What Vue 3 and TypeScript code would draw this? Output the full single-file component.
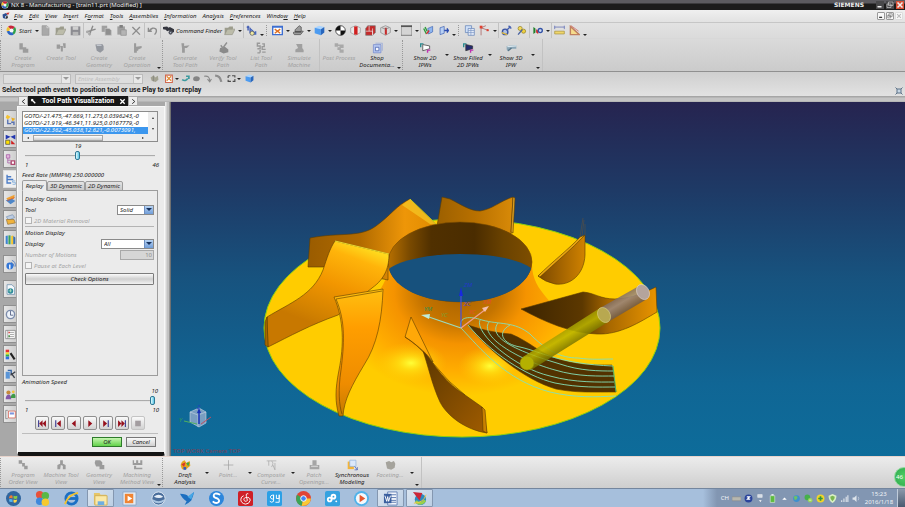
<script setup lang="ts">
import { h, ref } from 'vue'

type Shape = [d: string, fill: string, stroke?: string, width?: number]

const G = '#9b9b9b'
const C = (x: number, y: number, r: number) =>
  `M${x - r} ${y}a${r} ${r} 0 1 0 ${2 * r} 0a${r} ${r} 0 1 0 ${-2 * r} 0Z`

const shapes: Record<string, Shape[]> = {
  nx: [[C(8, 8, 7), '#e8e8e8'], ['M8 8L3 2Q8-1 13 3Z', '#c8243a'], ['M8 8L13 3Q17 9 11 14Z', '#2fa04a'], ['M8 8L11 14Q4 17 1 9Z', '#2b64c4'], ['M8 8L1 9Q0 5 3 2Z', '#f0c030'], [C(8, 8, 3), '#f4f6f8']],
  part: [['M1 5L8 2L11 6L6 9L8 14L2 12Z', '#2d4f91'], ['M8 2L15 1L12 6Z', '#cf3030'], ['M8 9L11 7L12 12L8 14Z', '#3a3a3a']],
  page: [['M3 1H10L13 4V15H3Z', '#a9a9a9', '#989898'], ['M10 1V4H13', 'none', '#ddd']],
  folder: [['M1 14V4H6L8 2H13V6', '#9c9c8c'], ['M1 14L5 6H16L12 14Z', '#bcbcaa', '#98988a']],
  save: [['M1 2H15V15H1Z', '#8d8d92'], ['M4 2H12V7H4Z', '#d0d0d0'], ['M4 10H12V15H4Z', '#b9b9b9']],
  cut: [['M10 1L7 9L5 15M14 6L1 10', 'none', '#8a8a8a', 2], [C(5, 13, 2), '#aaa'], [C(2, 10, 2), '#aaa']],
  copy: [['M1 1H9V10H1Z', '#a0a0a0'], ['M6 5H12L15 8V15H6Z', '#8f8f8f', '#c4c4c4']],
  paste: [['M2 2H13V14H2Z', '#9f9f9f'], ['M5 0H10V4H5Z', '#808080'], ['M7 7H15V15H7Z', '#b4b4b4', '#8d8d8d']],
  del: [['M2 3L13 14M13 3L2 14', 'none', '#8c8c8c', 2]],
  undo: [['M2 4V9H7M3 9Q8 2 13 6Q15 10 11 14', 'none', '#8c8c8c', 2]],
  binoc: [['M0 3L6 2L8 4L10 3L16 6V10L12 12L9 8L6 9L4 7L0 6Z', '#34363f'], [C(11, 11, 3), '#52555f'], [C(11, 11, 1), '#b8c2d0']],
  move: [['M3 1V8M1 3H5M6 4V12', 'none', '#3a56b0', 2], ['M7 6L14 13M10 13H14V9', 'none', '#4466c0', 2], [C(9, 12, 3), '#f0e9a0', '#555']],
  fit: [['M1 2H15V14H1Z', '#fff', '#3f6fd0', 2], ['M4 6L12 12M12 6L4 12', 'none', '#e07020', 2], ['M1 2H15V4H1Z', '#3f6fd0']],
  sphere: [['M3 7L9 1L12 3V9H15L11 14H2L0 11L3 10Z', '#9b9b9b', '#4a4a4a'], ['M3 10H12', 'none', '#444', 2]],
  cube: [['M1 4L7 1L15 3L10 6Z', '#a9d4ff'], ['M1 4L10 6V15L1 12Z', '#4c9bf0'], ['M10 6L15 3V11L10 15Z', '#2766bd']],
  bw: [[C(8, 8, 7), '#fff', '#111', 1], ['M8 1A7 7 0 0 0 1 8H8V15A7 7 0 0 0 15 8H8Z', '#111']],
  sec1: [['M8 1L15 4V11L8 15L1 11V4Z', '#e8e8e8', '#999'], ['M6 2H11V14H6Z', '#d02020']],
  sec2: [['M4 1H15V11L11 15H1V5Z', '#c52a2a', '#777'], ['M1 9H11V15M6 1V9M11 5V15', 'none', '#e9e9e9', 1]],
  sec3: [['M8 1L15 4V11L8 15L1 11V4Z', '#d8d8d8', '#888'], ['M7 4H10V14H7Z', '#c52a2a'], ['M3 4L8 6L13 4', 'none', '#777']],
  box: [['M0 1H16V15H0Z', '#d4d4d4', '#555', 1], ['M0 1H16V3H0Z', '#555']],
  wcs1: [['M7 5L14 2V10L8 13Z', '#8fb6f0', '#4066b4'], ['M1 5L5 13M3 3L6 9', 'none', '#2f9b3e', 2], ['M5 13L9 8', 'none', '#d03030', 2]],
  wcs2: [['M3 4L9 2V12L3 14Z', '#b8d0f4', '#3c5fb2'], ['M9 8H15M13 5L15 8L13 11', 'none', '#2a4bb0', 2]],
  layers: [['M2 1H11V11H2Z', '#cfe0f8', '#5f7fb5'], ['M6 5H15V15H6Z', '#e4ecf8', '#5f7fb5'], ['M6 8H15M6 11H15M10 5V15', 'none', '#7d98c6']],
  csys: [['M3 15V4L14 8M3 4L10 1', 'none', '#a05050', 1], ['M1 1H5V5H1Z', '#e04030'], ['M11 6H14V9H11Z', '#e04030']],
  meas: [[C(6, 10, 4), '#aebfe2', '#3852a0', 2], ['M8 8L14 2M11 1L15 5', 'none', '#445fb0', 2], ['M1 11L9 14', 'none', '#e0ba3a', 2]],
  key: [[C(6, 5, 3), '#f4d95a', '#8f7d20'], [C(11, 9, 3), '#f0d040', '#8f7d20'], ['M3 14L9 7', 'none', '#4c64a0', 2]],
  rgb: [['M2 3V13L5 11V5Z', '#20802c'], ['M6 6L9 8V13L6 11Z', '#d02a2a'], [C(12, 8, 3), '#cfdbf3', '#3353a6', 2]],
  dist: [['M1 3H15M1 6V1M15 6V1', 'none', '#5060b0', 1], ['M1 9H15V13H1Z', '#f0d66a', '#a5903a']],
  angle: [['M2 2L15 14H2Z', '#f6dc8c', '#c08060', 2], ['M3 1L14 9', 'none', '#d05a50', 1]],
  blk1: [['M2 1H7V7H12V9H15V15H7V10H2Z', '#9c9c9c']],
  blk2: [['M1 3H6V9H1ZM6 5H10V13H7V8ZM10 1H14V8H11Z', G]],
  blk3: [['M2 3L12 2L14 5V11L9 15L4 12Z', '#93979e'], ['M4 4L11 4', 'none', '#c5c9d0', 2]],
  blk4: [['M3 1H6V6L14 5V8L9 10V12H7V15H3V9Z', G]],
  gen: [['M2 1H6V5L14 4L10 8H7V15H3V9Z', G]],
  verify: [['M3 8L10 6L15 10V14L8 16L2 13Z', '#8a8a8a'], ['M4 4L7 8L13 0', 'none', '#8f8f8f', 2]],
  list: [['M6 1H2V5H6V9H2M6 11V15M2 15H6M9 2H12V6H9V10H14M9 14H14', 'none', '#999', 2]],
  sim: [['M3 2H12V8L14 11V14H2V10L6 8Z', '#a0a0a0']],
  post: [['M1 1H6V6H1ZM6 3H10V10H14V15H8V11H5V7H8V5H6ZM10 3H14V8H10Z', '#a9a9a9']],
  shop: [['M2 3H13V15H2Z', '#b3c4ee', '#7288cc'], ['M5 1H15V12', 'none', '#8fa3da', 1], ['M5 7H10V12H5Z', '#f6f8ff', '#3c58a8']],
  ipw1: [['M1 1V7M1 2H5', 'none', '#2a8a90', 2], ['M4 3L14 5V9L4 12Z', '#fff', '#333'], ['M11 11H15M11 15V11', 'none', '#c030b0', 2]],
  ipw2: [['M1 1V7M1 2H5', 'none', '#2a8a90', 2], ['M4 3L14 5V9L4 12Z', '#242a6e', '#333'], ['M11 11H15M11 15V11', 'none', '#c030b0', 2]],
  ipw3: [['M1 5L15 4V9L7 9L3 13L1 10Z', '#8ba6b6'], ['M2 6L15 5', 'none', '#d7e6ee', 2], ['M3 12L8 8', 'none', '#547488', 2]],
  v1: [['M1 1H6V5H10V9H14V14H9V10H6V6H1Z', G]],
  v2: [['M6 1H10V6L14 8V14H10V9L7 8L6 14H2V8L6 6Z', G]],
  v3: [['M2 1H9L12 4V8H15V14H8V10H3L1 5Z', G]],
  v4: [['M1 1H3V5H6V1H9V5H12V1H15V8H1ZM3 9H6V12H15V14H3Z', G]],
  draft: [['M1 9Q1 3 7 1L9 5L14 2L15 9L9 14H3Z', '#e7a51f'], ['M2 7L8 4L6 11Z', '#d6352a'], ['M9 5L14 4L12 10Z', '#3aa846'], ['M5 11H9V15H5Z', '#3559b6']],
  point: [['M8 1V15M1 8H15', 'none', '#9d9d9d', 1]],
  comp: [['M1 2H15M4 2V9M8 2Q12 5 8 11M13 5V15M10 8L13 15', 'none', '#a5a5a5', 1]],
  patch: [['M5 1H11V8H15V14H1V8H5Z', '#a5a5a5'], ['M3 10H13', 'none', '#d0d0d0', 2]],
  sync: [['M1 3H10V14H1Z', '#f3b43a'], ['M4 1H13V10H4Z', '#dce8fa', '#8fb0dc'], ['M11 10L15 15M15 11V15H11', 'none', '#3b58b0', 1]],
  facet: [['M1 4L6 2L9 4L13 2L15 6L14 12L9 15L3 13Z', '#a5a39c']],
  filt: [['M1 2H13V15H1Z', '#fff', '#d06a50', 2], ['M3 4L11 12M11 4L3 12', 'none', '#e08a30', 2]],
  swoop: [['M2 10Q8 14 12 8M9 4H14V9', 'none', '#3c9a9e', 3]],
  blob: [['M2 9Q2 4 8 4Q14 4 14 9Q13 13 8 13Q2 13 2 9Z', '#858585']],
  arc: [['M2 4Q12 2 12 13M8 9L12 14L15 9', 'none', '#8a8a8a', 2]],
  arc2: [['M2 3Q11 3 13 14', 'none', '#8d8d8d', 4]],
  dash: [['M2 3H6M9 3H14V6M14 9V13H10M7 13H2V10M2 7V3', 'none', '#4c4c4c', 2]],
  hex: [['M1 6L7 2L9 6L14 3L15 10L10 14L3 12Z', '#a2a291'], ['M6 3V13', 'none', '#777']],
  r1: [['M3 1L8 4L4 8L1 5Z', '#f5c330'], ['M9 5L15 7L11 11Z', '#e9ae22'], ['M4 8V14H9M9 12H13V16', 'none', '#5872b2', 2]],
  r2: [['M1 1V8L8 4Z', '#2338b0'], ['M15 1V8L8 4Z', '#2338b0'], ['M1 9H7V15H1Z', '#ffe000', '#444'], ['M9 15V9L15 15Z', '#d02020']],
  r3: [['M2 1H7V6H2Z', '#e2b7dc', '#a050a0'], ['M4 6V13H9M4 9H8', 'none', '#a050a0', 1], ['M9 10H14V15H9Z', '#fff', '#b04a70', 2]],
  r4: [['M3 1V14M3 4H9M3 8H12M3 13H9', 'none', '#4b7cc6', 2], ['M11 10H15M11 10V12H15V15H11', 'none', '#69a0d8', 1]],
  r5: [['M2 6L14 1L13 7L5 11Z', '#f0a030'], ['M1 9L10 7L15 10L8 15Z', '#4e87c8'], ['M3 10L14 5', 'none', '#d05038', 1]],
  r6: [['M2 4L11 1L14 5L5 9Z', '#bdcde2', '#7890b0'], ['M2 8H13L15 13L4 15Z', '#efb23c', '#94733a']],
  r7: [['M1 3L4 2V15L1 14Z', '#3b82d0'], ['M5 2H8V15H5Z', '#38a35a'], ['M9 3L12 2V15H9Z', '#f4c62e'], ['M12 3L15 5V14L12 15Z', '#3b6fb0']],
  r8: [[C(7, 10, 5), '#3276d6'], ['M7 8V14', 'none', '#fff', 2], ['M9 5Q13 6 13 11M10 2Q16 4 15 11', 'none', '#2c62b8', 1]],
  r9: [['M3 1H10L14 5V15H3Z', '#f5f8fb', '#6087a8'], [C(8, 10, 4), '#2f8a9a'], ['M5 10H10M8 7V12', 'none', '#bfe9c0', 1]],
  r10: [[C(8, 8, 6), '#eef3fa', '#7c8cab', 2], ['M8 3V9H12', 'none', '#2c3c66', 1]],
  r11: [['M1 2H15V14H1Z', '#fafafa', '#777'], ['M4 2V14M7 5H13M7 8H13M7 11H13', 'none', '#8a8a8a', 1], ['M5 4H7V6H5Z', '#d03030'], ['M5 9H7V12H5Z', '#308030']],
  r12: [['M1 1H6V5H1Z', '#e83030'], ['M1 5H6V8H1Z', '#f4e030'], ['M1 8H6V11H1Z', '#30b040'], ['M1 11H6V15H1Z', '#3070e0'], ['M8 6L14 15', 'none', '#222', 3]],
  r13: [['M1 4H7V14H1Z', '#5a95d8'], ['M4 2H9V8', 'none', '#3565a5', 2], ['M8 9L15 4M9 6L14 13', 'none', '#3c414b', 2]],
  r14: [[C(5, 5, 3), '#c58a3c'], ['M1 15Q1 8 6 8Q9 9 9 15Z', '#8458a8'], [C(12, 4, 2), '#f2c53a'], ['M8 13Q9 7 13 7Q16 8 15 13Z', '#3f9a48']],
  r15: [['M4 2H1V14H4', 'none', '#777', 1], ['M5 3H15V13H5Z', '#fff', '#d05040', 1], ['M7 5H13V8H7Z', '#7b94dc']],
  win: [[C(8, 8, 8), '#2f659e'], ['M4 5Q6 4 7 5V8Q5 7 3 8Z', '#f07a35'], ['M8 5Q10 6 12 5V8Q10 9 8 8Z', '#8dcc42'], ['M3 9Q5 8 7 9V12Q5 11 4 12Z', '#56b4ee'], ['M8 9Q10 10 12 9L11 12Q9 13 8 12Z', '#ffd64a']],
  balls: [[C(5, 4, 4), '#e9513a'], [C(11, 5, 4), '#58b848'], [C(5, 11, 4), '#3e88dc'], [C(11, 12, 4), '#f6c92f']],
  ie: [[C(8, 8, 6), 'none', '#1c6fc4', 3], ['M4 8H13', 'none', '#1c6fc4', 3], ['M1 14Q4 4 15 2', 'none', '#f2c230', 2]],
  files: [['M1 2H7L8 4H14V14H1Z', '#e6c667'], ['M2 5H15V15H2Z', '#fbe9a6', '#cfae55'], ['M5 11H12V15H5Z', '#6eaee0']],
  play: [['M1 1H15V15H1Z', '#e4ecf4', '#8fa8c4'], ['M3 3H12V13H3Z', '#f08432'], ['M6 5L11 8L6 11Z', '#fff']],
  orb: [[C(8, 8, 7), '#4a6e9c', '#dfe8f2', 1], ['M3 6Q8 2 13 6Q9 9 3 6Z', '#e6eef8'], ['M2 10Q8 14 14 10', 'none', '#a8c4e0', 2]],
  bird: [['M0 3Q7 3 9 6L15 1Q14 6 12 10Q9 13 5 15L7 11Q3 9 0 3Z', '#1d6fc0'], ['M8 6L15 1L12 9Z', '#45a7e6']],
  sogou: [[C(8, 8, 8), '#2c86dc'], ['M12 4Q5 1 5 5Q5 7 9 8Q12 10 10 12Q7 14 4 11', 'none', '#fff', 2]],
  music: [['M2 0H14Q16 0 16 2V14Q16 16 14 16H2Q0 16 0 14V2Q0 0 2 0Z', '#cf2027'], ['M11 3Q8 2 9 6L10 10A2 2 0 1 1 8 7Q13 6 13 10Q12 14 8 14Q3 13 3 9Q3 6 6 5', 'none', '#fff', 1]],
  note: [['M2 0H14Q16 0 16 2V14Q16 16 14 16H2Q0 16 0 14V2Q0 0 2 0Z', '#2ba0e6'], ['M7 5A2 2 0 1 0 7 8V4V11Q5 13 3 11M10 4V8H13V4V12H9', 'none', '#fff', 1]],
  chrome: [[C(8, 8, 8), '#e04436'], ['M1 4L8 8L6 16Q-2 13 1 4Z', '#3aa557'], ['M8 8H16Q15 16 6 16Z', '#f9c936'], [C(8, 8, 3), '#4285f4', '#fff', 1]],
  cloud: [['M2 0H14Q16 0 16 2V14Q16 16 14 16H2Q0 16 0 14V2Q0 0 2 0Z', '#35a2e0'], [C(5, 9, 2), 'none', '#fff', 2], [C(9, 6, 2), 'none', '#fff', 2], [C(12, 11, 1), '#fff']],
  video: [[C(8, 8, 8), '#4fb2ea'], [C(8, 8, 6), '#f4f8fb'], ['M6 4L12 8L6 12Z', '#e5562e']],
  word: [['M5 1H15V15H5Z', '#f4f7fc', '#6280b5'], ['M8 4H14M8 7H14M8 10H14M8 12H14', 'none', '#5876ae', 1], ['M1 3H9V13H1Z', '#3a5f9f'], ['M2 5L4 11L5 6L6 11L8 5', 'none', '#fff', 1]],
  nx8: [[C(9, 9, 6), '#2d8ac0'], ['M4 11Q9 16 14 10', 'none', '#9bd04a', 3], ['M1 1L11 2L8 10Z', '#cc2638'], ['M2 13Q12 13 15 4', 'none', '#f3c642', 1]],
  kbd: [['M0 5H16V12H0Z', '#b7b7ae', '#888']],
  help: [[C(8, 8, 7), '#2a449c'], ['M5 5H10L6 9H11', 'none', '#fff', 2]],
  opt: [['M3 1H11V6H3Z', '#d5dde8', '#eee'], ['M5 11H10L8 14Z', '#fff']],
  usb: [['M4 3H12V15H4Z', '#5dbb3f', '#e5f0e0', 1], ['M6 0H10V3H6Z', '#dfe5e8']],
  up: [['M4 10L8 6L12 10Z', '#fff']],
  net: [[C(8, 8, 6), '#3f8fcf'], ['M3 5Q8 2 10 6Q9 10 5 11Z', '#6dc06a']],
  wx: [[C(6, 6, 5), '#46b04c'], [C(11, 11, 4), '#9ad65a'], ['M9 11H13', 'none', '#fff', 1]],
  plus: [[C(8, 8, 7), '#f0d52a'], ['M8 4V12M4 8H12', 'none', '#2f9440', 3]],
  shield: [['M8 0L15 3Q15 12 8 16Q1 12 1 3Z', '#d9efc4'], ['M8 3L12 5Q12 10 8 13Q4 10 4 5Z', '#79b650']],
  sig: [['M2 14V11H4V14ZM6 14V8H8V14ZM10 14V5H12V14ZM13 14V2H15V14Z', '#dfe5ec']],
  vol: [['M1 6H4L8 2V14L4 10H1Z', '#dfe5ec'], ['M11 5Q13 8 11 11', 'none', '#dfe5ec', 1]],
  first: [['M1 2H3V14H1Z', '#3a3a90'], ['M9 2V14L3 8ZM15 2V14L9 8Z', '#96101c']],
  prev: [['M3 2H5V14H3Z', '#3a3a90'], ['M13 2V14L6 8Z', '#96101c']],
  back: [['M11 2V14L4 8Z', '#96101c']],
  fwd: [['M5 2V14L12 8Z', '#96101c']],
  next: [['M11 2H13V14H11Z', '#3a3a90'], ['M3 2V14L10 8Z', '#96101c']],
  last: [['M13 2H15V14H13Z', '#3a3a90'], ['M1 2V14L7 8ZM7 2V14L13 8Z', '#96101c']],
  stop: [['M3 3H13V13H3Z', '#a39da0']],
  min: [['M3 10H11V13H3Z', 'currentColor']],
  max: [['M5 2H14V9H5ZM2 6H10V13H2Z', 'none', 'currentColor', 1]],
  close: [['M3 3L13 13M13 3L3 13', 'none', 'currentColor', 3]],
  pin: [['M3 3L12 12M3 7L7 3', 'none', '#fff', 3]],
  lt: [['M11 3L5 8L11 13', 'none', '#222', 2]],
  gt: [['M5 3L11 8L5 13', 'none', '#222', 2]],
  full: [['M1 1L5 5M15 1L11 5M1 15L5 11M15 15L11 11', 'none', '#5d7388', 2], ['M4 4H12V12H4Z', '#c7d6e4', '#5d7388', 2]],
}

const Icon = (props: { name: string }) =>
  h('svg', { viewBox: '0 0 16 16', 'aria-hidden': 'true' },
    shapes[props.name].map(([d, fill, stroke, width]) =>
      h('path', { d, fill, stroke: stroke ?? 'none', 'stroke-width': width ?? 1 })))
Icon.props = ['name']

const menus = ['File', 'Edit', 'View', 'Insert', 'Format', 'Tools', 'Assemblies', 'Information', 'Analysis', 'Preferences', 'Window', 'Help']
const menuKeys = [0, 0, 0, 2, 1, 0, 0, 0, 3, 0, 5, 0]

// Bar tokens: "|" separator, ":" grip, "v" drop-down arrow, "." overflow mark
const leftTools = 'page folder save | cut copy paste del | undo |'.split(' ')
const rightTools = 'folder v | move . : fit v sphere v cube v bw sec1 sec2 sec3 v box v | wcs1 wcs2 . : layers csys v | meas key | rgb v | dist angle .'.split(' ')
const marks: Record<string, string> = { '|': 'sep', ':': 'grip', v: 'arrow', '.': 'more' }

interface Tool { mark?: string; icon?: string; text?: string; on?: boolean }
const t = (icon: string, text: string, on = false): Tool => ({ icon, text, on })
const m = (mark: string): Tool => ({ mark })
const cam: Tool[] = [
  m(':'), t('blk1', 'Create\nProgram'), t('blk2', 'Create Tool'), t('blk3', 'Create\nGeometry'), t('blk4', 'Create\nOperation'), m('.'), m(':'),
  t('gen', 'Generate\nTool Path'), t('verify', 'Verify Tool\nPath'), t('list', 'List Tool\nPath'), t('sim', 'Simulate\nMachine'), m('|'),
  t('post', 'Post Process'), t('shop', 'Shop\nDocumenta...', true), m('.'), m(':'),
  t('ipw1', 'Show 2D\nIPWs', true), m('v'), t('ipw2', 'Show Filled\n2D IPWs', true), m('v'), t('ipw3', 'Show 3D\nIPW', true), m('v'), m('.'), m('|'),
]
const views: Tool[] = [
  m(':'), t('v1', 'Program\nOrder View'), t('v2', 'Machine Tool\nView'), t('v3', 'Geometry\nView'), t('v4', 'Machining\nMethod View'), m('.'), m(':'),
  t('draft', 'Draft\nAnalysis', true), m('v'), t('point', 'Point...'), m('v'), t('comp', 'Composite\nCurve...'), m('v'),
  t('patch', 'Patch\nOpenings...'), t('sync', 'Synchronous\nModeling', true), t('facet', 'Faceting...'), m('v'), m('.'), m('|'),
]

const resources = Array.from({ length: 15 }, (_, i) => `r${i + 1}`)
const moves = ['GOTO/-21.475,-47.669,11.273,0.0396243,-0', 'GOTO/-21.919,-46.341,11.925,0.0167779,-0', 'GOTO/-22.362,-45.038,12.621,-0.0073091,']
const tabs = ['Replay', '3D Dynamic', '2D Dynamic']
const tab = ref('Replay')
const row = ref(2)
const motion = ref(19)
const speed = ref(10)
const transport = ['first', 'prev', 'back', 'fwd', 'next', 'last', 'stop']
const apps = ['win', 'balls', 'ie', 'files', 'play', 'orb', 'bird', 'sogou', 'music', 'note', 'chrome', 'cloud', 'video', 'word', 'nx8']
const openApps = ['files', 'word', 'nx8']
const tray = ['kbd', 'help', 'opt', 'usb', 'up', 'net', 'wx', 'plus', 'shield', 'sig', 'vol']
</script>

<template>
  <div class="app">
    <header class="title">
      <Icon name="nx" /><h1>NX 8 - Manufacturing - [train11.prt (Modified) ]</h1>
      <b class="brand">SIEMENS</b>
      <button aria-label="Minimize"><Icon name="min" /></button>
      <button aria-label="Restore"><Icon name="max" /></button>
      <button class="red" aria-label="Close"><Icon name="close" /></button>
    </header>

    <nav class="menu">
      <Icon name="part" />
      <button v-for="(x, i) in menus" :key="x">{{ x.slice(0, menuKeys[i]) }}<u>{{ x[menuKeys[i]] }}</u>{{ x.slice(menuKeys[i] + 1) }}</button>
      <span class="fill"></span>
      <button class="mdi" aria-label="Minimize part"><Icon name="min" /></button>
      <button class="mdi" aria-label="Restore part"><Icon name="max" /></button>
      <button class="mdi off" aria-label="Close part"><Icon name="close" /></button>
    </nav>

    <section class="bars">
      <div class="bar">
        <i class="grip"></i>
        <button class="start"><Icon name="nx" />Start<i class="arrow"></i></button>
        <template v-for="(x, i) in leftTools" :key="i">
          <i v-if="marks[x]" :class="marks[x]"></i>
          <button v-else class="tool" :aria-label="x"><Icon :name="x" /></button>
        </template>
        <button class="finder"><Icon name="binoc" />Command Finder</button>
        <template v-for="(x, i) in rightTools" :key="i">
          <i v-if="marks[x]" :class="marks[x]"></i>
          <button v-else class="tool" :aria-label="x"><Icon :name="x" /></button>
        </template>
      </div>
      <div class="ribbon">
        <template v-for="(x, i) in cam" :key="i">
          <i v-if="x.mark" :class="marks[x.mark]"></i>
          <button v-else :class="{ on: x.on }"><Icon :name="x.icon!" /><span>{{ x.text }}</span></button>
        </template>
      </div>
    </section>

    <section class="status">
      <div class="filters">
        <span class="drop off wide"><select aria-label="Type filter" disabled><option></option></select></span>
        <span class="drop off wide"><select aria-label="Selection scope" disabled><option>Entire Assembly</option></select></span>
        <button class="tool" aria-label="Reset"><Icon name="hex" /></button>
        <button class="tool" aria-label="Snap"><Icon name="filt" /></button><i class="arrow"></i>
        <button v-for="x in ['swoop', 'blob', 'arc', 'arc2']" :key="x" class="tool small" :aria-label="x"><Icon :name="x" /></button>
        <button class="tool" aria-label="Rectangle"><Icon name="dash" /></button><i class="arrow"></i>
        <button class="tool" aria-label="Shaded"><Icon name="cube" /></button>
      </div>
      <div class="prompt"><p>Select tool path event to position tool or use Play to start replay</p>
        <button aria-label="Full screen"><Icon name="full" /></button></div>
    </section>

    <main class="work">
      <aside class="resources">
        <button v-for="x in resources" :key="x" :class="{ gap: ['r8', 'r9', 'r10'].includes(x), cur: x === 'r4' }" :aria-label="x"><Icon :name="x" /></button>
      </aside>

      <section class="dialog" aria-label="Tool Path Visualization">
        <header>
          <button aria-label="Previous"><Icon name="lt" /></button>
          <div class="cap"><Icon name="pin" /><h2>Tool Path Visualization</h2><button aria-label="Close dialog"><Icon name="close" /></button></div>
          <button aria-label="Next"><Icon name="gt" /></button>
        </header>
        <div class="body">
          <div class="listbox">
            <ul role="listbox" aria-label="Tool path events">
              <li v-for="(x, i) in moves" :key="x" role="option" :aria-selected="row === i" @click="row = i">{{ x }}</li>
            </ul>
            <div class="vs"><i></i><i></i></div>
            <div class="hs"><i></i><b></b><i></i></div>
          </div>
          <div class="slide">
            <output class="mid">{{ motion }}</output>
            <input v-model.number="motion" type="range" min="1" max="46" aria-label="Motion">
            <div class="ends"><span>1</span><span>46</span></div>
          </div>
          <p class="feed">Feed Rate (MMPM) 250.000000</p>
          <div class="tabs" role="tablist">
            <button v-for="x in tabs" :key="x" role="tab" :aria-selected="tab === x" @click="tab = x">{{ x }}</button>
          </div>
          <div class="panel">
            <h3>Display Options</h3>
            <div class="field"><label for="tool">Tool</label><span class="drop"><select id="tool"><option>Solid</option></select></span></div>
            <label class="check"><input type="checkbox" disabled>2D Material Removal</label>
            <hr>
            <h3>Motion Display</h3>
            <div class="field long"><label for="disp">Display</label><span class="drop"><select id="disp"><option>All</option></select></span></div>
            <div class="field dim"><label for="num">Number of Motions</label><input id="num" value="10" disabled></div>
            <label class="check"><input type="checkbox" disabled>Pause at Each Level</label>
            <button class="options">Check Options</button>
          </div>
          <p class="feed">Animation Speed</p>
          <div class="slide">
            <output class="end">{{ speed }}</output>
            <input v-model.number="speed" type="range" min="1" max="10" aria-label="Animation Speed">
            <div class="ends"><span>1</span><span>10</span></div>
          </div>
          <div class="transport">
            <button v-for="x in transport" :key="x" :aria-label="x" :class="{ off: x === 'stop' }"><Icon :name="x" /></button>
          </div>
          <footer><button class="ok">OK</button><button>Cancel</button></footer>
        </div>
      </section>

      <div class="edge"></div>

      <svg class="view" viewBox="171 102 734 354" preserveAspectRatio="xMidYMid slice" role="img" aria-label="Impeller with tool path">
        <defs>
          <linearGradient id="sky" x2="0" y2="1"><stop stop-color="#262450" /><stop offset=".25" stop-color="#1e3a66" /><stop offset=".5" stop-color="#17537f" /><stop offset=".8" stop-color="#106695" /><stop offset="1" stop-color="#0d6c9a" /></linearGradient>
          <radialGradient id="hub" gradientUnits="userSpaceOnUse" cx="0" cy="0" r="1" gradientTransform="translate(460 292) scale(132 104)"><stop stop-color="#a86200" /><stop offset=".3" stop-color="#c47400" /><stop offset=".5" stop-color="#f59300" /><stop offset=".75" stop-color="#ffac00" /><stop offset="1" stop-color="#ffcc00" /></radialGradient>
          <radialGradient id="glow"><stop stop-color="#ffff38" /><stop offset=".35" stop-color="#ffee18" stop-opacity=".6" /><stop offset="1" stop-color="#ffcc00" stop-opacity="0" /></radialGradient>
          <linearGradient id="wall"><stop stop-color="#b87000" /><stop offset=".15" stop-color="#7a4a00" /><stop offset=".3" stop-color="#503000" /><stop offset=".6" stop-color="#4a2c00" /><stop offset=".8" stop-color="#6a4200" /><stop offset="1" stop-color="#7e4e00" /></linearGradient>
          <linearGradient id="ga"><stop stop-color="#9a5c00" /><stop offset=".4" stop-color="#b06a00" /><stop offset=".75" stop-color="#ee9608" /><stop offset="1" stop-color="#e08c00" /></linearGradient>
          <linearGradient id="gb" gradientUnits="userSpaceOnUse" x1="362" y1="247" x2="330" y2="330"><stop stop-color="#ffd81c" /><stop offset=".15" stop-color="#ffb40a" /><stop offset=".5" stop-color="#f29600" /><stop offset=".9" stop-color="#d08000" /><stop offset="1" stop-color="#c87800" /></linearGradient>
          <linearGradient id="gc" x2="0" y2="1"><stop stop-color="#ffc010" /><stop offset=".3" stop-color="#ff9e00" /><stop offset=".75" stop-color="#ee8c00" /><stop offset="1" stop-color="#c27a00" /></linearGradient>
          <linearGradient id="ge"><stop stop-color="#9c6000" /><stop offset=".5" stop-color="#b87000" /><stop offset="1" stop-color="#d88a08" /></linearGradient>
          <linearGradient id="gf"><stop stop-color="#7a4800" /><stop offset="1" stop-color="#d08200" /></linearGradient>
          <linearGradient id="gg"><stop stop-color="#3c2400" /><stop offset=".45" stop-color="#5c3800" /><stop offset=".65" stop-color="#a86800" /><stop offset="1" stop-color="#e89400" /></linearGradient>
          <linearGradient id="gd" x2="1" y2="1"><stop stop-color="#5a3600" /><stop offset="1" stop-color="#a05c00" /></linearGradient>
          <linearGradient id="cyl" gradientUnits="userSpaceOnUse" x1="561" y1="331" x2="570" y2="346"><stop stop-color="#a09a00" /><stop offset=".4" stop-color="#bcb600" /><stop offset="1" stop-color="#7a7600" /></linearGradient>
          <linearGradient id="cyl2" gradientUnits="userSpaceOnUse" x1="619" y1="296" x2="628" y2="311"><stop stop-color="#806c60" /><stop offset=".4" stop-color="#9c8a80" /><stop offset="1" stop-color="#6c5846" /></linearGradient>
        </defs>
        <rect x="171" y="102" width="734" height="354" fill="url(#sky)" />
        <ellipse cx="462" cy="328" rx="198" ry="109" fill="#ffcc00" stroke="#8ad010" />
        <path d="M388 262C390 285 372 300 350 322C350 375 400 402 460 400C520 400 560 375 565 330C560 300 531 295 532 262Z" fill="url(#hub)" />
        <ellipse cx="411" cy="363" rx="36" ry="21" fill="url(#glow)" />
        <ellipse cx="490" cy="366" rx="32" ry="20" fill="url(#glow)" />
        <g stroke="#5c3c00" stroke-width=".6" stroke-linejoin="round">
          <path d="M442 197L450 199C462 205 470 211 480 211C493 209 500 201 513 197L511 234C490 224 465 220 437 226Z" fill="url(#ge)" />
          <path d="M513 197L515 198L513 233L511 232Z" fill="#e0a020" />
          <path d="M310 238C340 232 360 238 376 226C390 216 397 205 410 199L437 225C405 235 392 248 388 268L388 280L325 267H308Z" fill="url(#ga)" />
        </g>
        <path d="M410 199L437 225L430 224L402 205Z" fill="#f6d22c" opacity=".6" />
        <path d="M410 199L437 225" stroke="#c8c820" />
        <ellipse cx="460" cy="262" rx="72" ry="40" fill="url(#wall)" stroke="#7a4c00" stroke-width=".6" />
        <path d="M389 269C400 260 430 254 460 254C492 254 518 259 531 268C526 288 497 302 460 302C423 302 394 288 389 269Z" fill="#17517d" />
        <g stroke="#5c3c00" stroke-width=".6" stroke-linejoin="round">
          <path d="M372 288L338 315C310 325 290 336 268 347L267 317C290 303 313 295 323 270C327 258 330 248 335 241L389 254C389 266 386 278 372 288Z" fill="url(#gb)" />
          <path d="M335 241L389 254" stroke="#e8d830" stroke-width="1.2" />
          <path d="M267 317L265 322V345L268 347Z" fill="#a66600" />
          <path d="M334 297L383 289C382 320 377 345 364 365C352 385 344 400 343 416L339 416C335 402 335 390 339 370C344 345 344 320 334 297Z" fill="url(#gc)" />
          <path d="M336 299C346 322 344 345 341 370C338 390 339 405 342 414M336 299L382 291" fill="none" />
          <path d="M422 348C436 368 446 383 465 395L482 407L487 433C466 430 447 416 440 402C432 385 428 365 422 348Z" fill="url(#gd)" />
          <path d="M482 407L485 410L487 433L483 431Z" fill="#c88000" />
          <path d="M411 317L433 362C424 350 415 344 405 337Z" fill="#ffa808" />
          <path d="M405 337C420 345 438 370 450 382L465 395" fill="none" />
          <path d="M538 276C552 265 568 250 580 239L585 235V255C584 275 570 286 555 284Q545 282 538 276Z" fill="url(#gf)" />
          <path d="M538 276C552 262 570 248 580 237L585 235C572 249 555 263 540 277Z" fill="#e8a410" />
          <path d="M580 237L583 218M582 236L584 220M585 236L585 224" fill="none" stroke="#60503c" />
          <path d="M521 309L583 292C595 293 600 299 615 299C635 298 645 292 656 287L657 312C640 322 620 335 597 334C570 333 545 322 521 309Z" fill="url(#gg)" />
          <path d="M468 325C482 330 497 333 511 334C530 342 540 353 555 358C575 365 592 365 612 365L616 392C595 392 575 393 556 389C525 380 490 352 468 325Z" fill="#523200" />
        </g>
        <g fill="none" stroke="#84e0b8" stroke-width=".9">
          <path d="M461 328C480 348 505 380 550 392C575 398 595 397 616 396" />
          <path d="M461 328C458 316 470 316 482 320C500 325 514 321 530 334C546 350 560 358 578 358C592 360 603 359 613 359" />
          <path d="M468 325C490 352 525 376 555 383C580 388 600 387 615 387" />
          <path d="M480 320C474 333 515 368 550 376C575 383 600 382 614 382" />
          <path d="M489 322C478 338 525 362 555 370C578 377 600 376 614 376" />
          <path d="M498 323C485 340 530 355 560 364C580 371 600 371 613 371" />
          <path d="M510 325C496 333 503 344 520 347C542 352 560 364 613 366" />
          <path d="M613 366L616 392" stroke="#3cb878" />
        </g>
        <g opacity=".86">
          <path d="M600 308L523 357L531 370L608 322Z" fill="url(#cyl)" />
          <path d="M639 286L600 308L608 322L647 299Z" fill="url(#cyl2)" />
        </g>
        <circle cx="527" cy="363" r="7" fill="#b4b000" stroke="#8f8c10" stroke-width=".5" />
        <ellipse cx="604" cy="315" rx="6" ry="8" transform="rotate(-30 604 315)" fill="#b8a850" stroke="#e4dc90" stroke-width=".5" />
        <ellipse cx="643" cy="292" rx="6" ry="8" transform="rotate(-30 643 292)" fill="#b4a49c" stroke="#e8dcd4" stroke-width=".5" />
        <g fill="none" stroke-width="1.2">
          <path d="M461 328V292" stroke="#4450e0" /><path d="M459 296L461 287L463 296Z" fill="#1828e0" />
          <path d="M461 328L426 316" stroke="#9adcc0" /><path d="M430 314L421 315L429 319Z" fill="#c0ecd8" />
          <path d="M461 328L486 309" stroke="#f0a090" /><path d="M482 308L489 306L485 312Z" fill="#f4c0b0" />
        </g>
        <g class="axis"><text x="464" y="287" fill="#2438c8">ZM</text><text x="464" y="306" fill="#5048c0">ZC</text><text x="483" y="304" fill="#e05030">XM</text><text x="469" y="314" fill="#e05030">XC</text><text x="424" y="311" fill="#309050">YM</text><text x="441" y="317" fill="#80a030">YC</text></g>
        <g stroke="#c8d4e4" stroke-width=".6">
          <path d="M190 412L199 408L206 412V423L199 427L190 422Z" fill="#8ca8c8" fill-opacity=".85" />
          <path d="M190 412L198 415L206 412M198 415V427" fill="none" />
        </g>
        <path d="M199 424V412" stroke="#1830b8" stroke-width="1.5" /><path d="M197 413L199 408L201 413Z" fill="#1830b8" />
        <path d="M197 424L184 421" stroke="#50b060" /><path d="M201 424L211 417" stroke="#c05060" />
        <g class="axis"><text x="179" y="422" fill="#30a050">Y</text><text x="197" y="409" fill="#2040c0">Z</text></g>
        <text class="cam" x="173" y="453">TOP WORK Camera TOP</text>
      </svg>
    </main>

    <section class="ribbon low">
      <template v-for="(x, i) in views" :key="i">
        <i v-if="x.mark" :class="marks[x.mark]"></i>
        <button v-else :class="{ on: x.on }"><Icon :name="x.icon!" /><span>{{ x.text }}</span></button>
      </template>
      <div class="badge">46</div>
    </section>

    <footer class="taskbar">
      <button v-for="x in apps" :key="x" :class="{ open: openApps.includes(x) }" :aria-label="x"><Icon :name="x" /></button>
      <div class="tray">
        <span>CH</span>
        <Icon v-for="x in tray" :key="x" :name="x" />
        <time>15:23<br>2016/1/18</time>
        <button class="desk" aria-label="Show desktop"></button>
      </div>
    </footer>
  </div>
</template>

<style>
body { margin: 0; }
</style>

<style scoped>
* { box-sizing: border-box; }
.app { min-height: 100vh; display: flex; flex-direction: column; overflow: hidden; font: italic 6px/8px "Noto Sans", "Liberation Sans", sans-serif; color: #1c1c1c; background: #d6d6d6; }
button, select, input { font: inherit; color: inherit; margin: 0; padding: 0; border: 0; background: none; border-radius: 0; }
h1, h2, h3, p, ul { margin: 0; padding: 0; font-size: inherit; font-weight: normal; list-style: none; }
svg { display: block; flex: none; }
i { flex: none; }

.title { height: 10px; display: flex; align-items: center; gap: 2px; padding: 0 1px; background: linear-gradient(#5c5b60 0 3px, #1c1c1c 4px); color: #f0f0f0; font-style: normal; }
.title svg { width: 8px; height: 8px; }
.title h1 { flex: 1; }
.brand { font: bold 6px/8px "DejaVu Sans", sans-serif; padding-right: 10px; }
.title button { width: 8px; height: 8px; background: #48484a; }
.title .red { background: #d95036; }

.menu { height: 13px; display: flex; align-items: center; gap: 6px; padding: 0 2px; background: linear-gradient(#f0f0f0, #e2e2e2); border-bottom: 1px solid #c6c6c6; }
.menu > svg { width: 8px; height: 8px; margin-right: -2px; }
.fill { flex: 1; }
.mdi { width: 8px; height: 8px; border: 1px solid #999; border-radius: 1px; background: #f8f8f8; margin-left: -5px; }
.mdi.off { color: #bbb; border-color: #ddd; }
.mdi svg { width: 6px; height: 6px; }

.bars { background: linear-gradient(#e2e2e2, #cbcbcb); border-bottom: 1px solid #909090; }
.bar { height: 16px; display: flex; align-items: center; border-bottom: 1px solid #d8d8d8; }
.tool { flex: none; width: 15px; height: 14px; display: grid; place-items: center; }
.tool svg { width: 11px; height: 11px; }
.start, .finder { flex: none; display: flex; align-items: center; white-space: nowrap; }
.start { width: 33px; gap: 2px; padding-left: 1px; }
.finder { width: 61px; gap: 2px; padding-left: 2px; }
.start svg, .finder svg { width: 11px; height: 11px; }
.grip { width: 4px; align-self: stretch; margin: 2px 0 2px 1px; border-left: 1px dotted #999; }
.sep { width: 2px; align-self: stretch; border-right: 1px solid #c2c2c2; }
.bar .sep { width: 1px; }
.arrow, .more { width: 6px; display: grid; place-items: center; }
.arrow::after, .more::after { content: ""; border: 2px solid transparent; border-top-color: #222; border-bottom: 0; }
.more { align-self: flex-end; padding-bottom: 2px; }

.ribbon { height: 32px; display: flex; align-items: center; }
.ribbon button { flex: none; width: 38px; height: 31px; display: flex; flex-direction: column; align-items: center; gap: 1px; padding-top: 2px; color: #a2a2a2; line-height: 7px; }
.ribbon button.on { color: #1c1c1c; }
.ribbon button svg { width: 11px; height: 12px; }
.ribbon span { white-space: pre; text-align: center; }
.ribbon .arrow { width: 5px; }
.ribbon .grip { margin: 1px 0; }

.status { background: linear-gradient(#cfcfcf, #e2e2e2); }
.filters { height: 13px; display: flex; align-items: center; padding-left: 3px; }
.filters svg { width: 9px; height: 9px; }
.filters .arrow { margin-left: -3px; }
.small { width: 11px; }
.prompt { height: 11px; display: flex; justify-content: space-between; align-items: center; padding: 0 2px; font-style: normal; }
.prompt p { font: bold 7px/9px Roboto, sans-serif; }
.prompt svg { width: 8px; height: 8px; }

.drop { display: grid; height: 10px; border: 1px solid #8a8a8a; background: #fff; }
.drop select { grid-area: 1 / 1; appearance: none; min-width: 0; padding-left: 2px; line-height: 8px; outline: 0; }
.drop::after { content: ""; grid-area: 1 / 1; justify-self: end; width: 8px; pointer-events: none; background: linear-gradient(#b6d2f2, #6f9cd8); border-left: 1px solid #6d8ec0; }
.drop::before { content: ""; grid-area: 1 / 1; z-index: 1; justify-self: end; align-self: center; margin-right: 1px; border: 3px solid transparent; border-top: 3px solid #16305c; border-bottom: 0; pointer-events: none; }
.drop.wide { width: 68px; margin-right: 4px; border-color: #bcbcbc; background: #dedede; color: #b0b0b0; }
.drop.off::after { background: #e8e8e8; border-color: #c4c4c4; }
.drop.off::before { border-top-color: #999; }

.work { flex: 1; display: flex; min-height: 0; background: linear-gradient(#a6a6a6 0 1px, #c4c4c4 2px 5px, #a8a8a8 6px); }
.resources { width: 17px; padding: 14px 1px 0 3px; display: flex; flex-direction: column; gap: 2px; }
.resources button { height: 18px; display: grid; place-items: center; background: linear-gradient(90deg, #e6e6e6, #cecece); border: 1px solid #8f8f8f; border-right: 0; border-radius: 1px 0 0 1px; }
.resources button.cur { background: #f0f0f0; border-color: #ddd; }
.resources .gap { margin-top: 5px; }
.resources svg { width: 11px; height: 11px; }

.dialog { width: 148px; display: flex; flex-direction: column; }
.dialog header { height: 10px; display: flex; padding-left: 1px; }
.dialog header > button { width: 10px; background: #ececec; border: 1px solid #aaa; display: grid; place-items: center; }
.dialog header svg { width: 7px; height: 7px; }
.cap { width: 100px; display: flex; align-items: center; justify-content: space-between; padding: 0 2px; background: #161616; color: #fff; font-style: normal; }
.cap h2 { font: bold 7px/10px Roboto, sans-serif; }
.body { flex: 1; display: flex; flex-direction: column; padding: 4px 6px 4px 4px; background: #ebebeb; border: solid #f8f8f8; border-width: 1px 1px 0; border-bottom: 4px solid #141414; border-radius: 0 0 3px 3px; }
.listbox { display: grid; grid-template: 22px 7px / 1fr 9px; border: 1px solid #8c8c8c; background: #ececec; }
.listbox ul { overflow: hidden; background: #fff; padding-top: 1px; }
.listbox li { white-space: nowrap; line-height: 7px; padding-left: 1px; }
.listbox li[aria-selected="true"] { background: #3c97ee; color: #fff; }
.vs { display: flex; flex-direction: column; justify-content: space-around; align-items: center; }
.vs i, .hs i { border: 1px solid transparent; }
.vs i:first-child { border-bottom: 2px solid #333; border-top: 0; }
.vs i:last-child { border-top: 2px solid #333; border-bottom: 0; }
.hs { display: flex; align-items: center; gap: 4px; padding: 0 4px; }
.hs i:first-child { border-right: 2px solid #333; border-left: 0; }
.hs i:last-child { border-left: 2px solid #333; border-right: 0; margin-left: auto; }
.hs b { width: 70px; height: 6px; border: 1px solid #a4a4a4; background: linear-gradient(#fff, #ccc); }
.slide { display: flex; flex-direction: column; padding: 0 3px; }
.slide output.mid { width: 106px; text-align: center; }
.slide output.end { text-align: right; margin-right: -3px; }
.slide input { appearance: none; width: 100%; height: 11px; outline: 0; background: linear-gradient(#909090, #fff) center / 100% 2px no-repeat; }
.slide input::-webkit-slider-thumb { appearance: none; width: 5px; height: 9px; border: 1px solid #2d7794; border-radius: 2px; background: linear-gradient(90deg, #e4fbff, #5ac6e6); }
.ends { display: flex; justify-content: space-between; margin-right: -4px; }
.feed { line-height: 10px; padding-top: 1px; }
.tabs { display: flex; align-items: flex-end; height: 11px; margin-bottom: -1px; z-index: 1; }
.tabs button { height: 10px; width: 38px; border: 1px solid #9c9c9c; border-radius: 2px 2px 0 0; background: linear-gradient(#e4e4e4, #c8c8c8); text-align: center; white-space: nowrap; line-height: 8px; }
.tabs button:first-child { width: 25px; }
.tabs button[aria-selected="true"] { height: 11px; background: #ebebeb; border-bottom-color: #ebebeb; }
.panel { flex: 1; border: 1px solid #9c9c9c; padding: 3px 3px 0 2px; display: flex; flex-direction: column; min-height: 0; }
.panel h3 { line-height: 10px; }
.field { height: 11px; display: flex; align-items: center; justify-content: space-between; }
.field .drop { width: 37px; }
.field.long .drop { width: 53px; }
.field.dim { color: #a4a4a4; }
.field input { width: 34px; height: 10px; border: 1px solid #a8a8a8; background: #d6d6d6; text-align: right; padding-right: 1px; font-style: normal; color: #8c8c8c; }
.check { height: 11px; display: flex; align-items: center; gap: 2px; color: #a4a4a4; }
.check input { appearance: none; width: 7px; height: 7px; border: 1px solid #b4b4b4; background: #f4f4f4; }
.panel hr { width: 100%; margin: 0 0 1px; border: 0; border-top: 1px solid #b4b4b4; }
.options { height: 12px; margin-top: 2px; border: 1px solid #7c7c7c; border-radius: 1px; background: linear-gradient(#fafafa, #cfcfcf 50%, #f2f2f2); }
.transport { display: flex; justify-content: center; gap: 2px; padding: 2px 0 3px; }
.transport button { width: 14px; height: 14px; display: grid; place-items: center; border: 1px solid #8f8f8f; border-radius: 2px; background: linear-gradient(#fafafa, #d2d2d2); }
.transport button.off { border-color: #c4c4c4; }
.transport svg { width: 10px; height: 9px; }
.body footer { display: flex; justify-content: flex-end; gap: 4px; padding: 3px 2px 1px 0; border-top: 1px solid #bdbdbd; }
.body footer button { width: 30px; height: 10px; border: 1px solid #777; background: linear-gradient(#fafafa, #d0d0d0); line-height: 8px; }
.body footer .ok { border-color: #2e7a2a; background: linear-gradient(#c6f6b0, #62d24a); }

.edge { width: 6px; margin-top: 6px; background: linear-gradient(90deg, #e6e6e6 0 1px, #c2c2c2 2px 4px, #707070 5px); }
.view { flex: 1; width: 0; min-width: 0; height: auto; margin-top: 6px; background: #17517d; }
.axis { font-size: 6px; }
.cam { font-style: normal; fill: #7c4058; font-size: 6px; }

.low { position: relative; background: linear-gradient(#ececec, #cecece); border-top: 1px solid #e8d4cc; }
.badge { position: absolute; right: -9px; top: 10px; width: 20px; height: 20px; border: 1px solid #8fd89c; border-radius: 50%; background: radial-gradient(#4fce68, #2fa84a); color: #fff; font-style: normal; line-height: 18px; padding-left: 1px; }

.taskbar { height: 19px; display: flex; background: #a6bfdc; border-top: 1px solid #74869e; }
.taskbar > button { flex: none; width: 27px; margin-right: 2px; display: grid; place-items: center; }
.taskbar > button.open { background: linear-gradient(135deg, #d9e4f0, #bccfe4); border: 1px solid #8497b0; border-radius: 1px; }
.taskbar > button svg { width: 15px; height: 15px; }
.tray { margin-left: auto; display: flex; align-items: center; gap: 3px; padding-left: 18px; color: #f0f3f7; font-style: normal; background: linear-gradient(90deg, #a6bfdc, #8296b2 14px); }
.tray svg { width: 9px; height: 9px; }
.tray time { width: 30px; text-align: center; }
.desk { width: 8px; align-self: stretch; background: linear-gradient(#8b99ab, #4a5a70); border-left: 1px solid #c0ccdb; }
</style>
